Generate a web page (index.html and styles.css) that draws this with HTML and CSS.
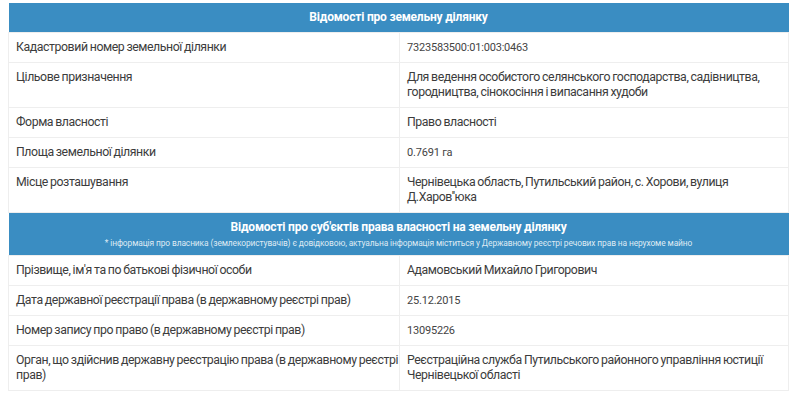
FILE: index.html
```html
<!DOCTYPE html>
<html lang="uk">
<head>
<meta charset="utf-8">
<title>Відомості про земельну ділянку</title>
<link rel="stylesheet" href="styles.css">
</head>
<body>
<table class="info">
  <colgroup><col class="c-label"><col class="c-value"></colgroup>
  <tr class="head"><th colspan="2">Відомості про земельну ділянку</th></tr>
  <tr><td>Кадастровий номер земельної ділянки</td><td class="num">7323583500:01:003:0463</td></tr>
  <tr><td>Цільове призначення</td><td>Для ведення особистого селянського господарства, садівництва, городництва, сінокосіння і випасання худоби</td></tr>
  <tr><td>Форма власності</td><td>Право власності</td></tr>
  <tr><td>Площа земельної ділянки</td><td class="num">0.7691 га</td></tr>
  <tr><td>Місце розташування</td><td>Чернівецька область, Путильський район, с. Хорови, вулиця Д.Харов''юка</td></tr>
  <tr class="head head2"><th colspan="2">Відомості про суб'єктів права власності на земельну ділянку<span class="note">* інформація про власника (землекористувачів) є довідковою, актуальна інформація міститься у Державному реєстрі речових прав на нерухоме майно</span></th></tr>
  <tr><td>Прізвище, ім'я та по батькові фізичної особи</td><td>Адамовський Михайло Григорович</td></tr>
  <tr><td>Дата державної реєстрації права (в державному реєстрі прав)</td><td class="num">25.12.2015</td></tr>
  <tr><td>Номер запису про право (в державному реєстрі прав)</td><td class="num">13095226</td></tr>
  <tr><td>Орган, що здійснив державну реєстрацію права (в державному реєстрі прав)</td><td>Реєстраційна служба Путильського районного управління юстиції Чернівецької області</td></tr>
</table>
</body>
</html>
```
FILE: styles.css
```css
html, body {
  background: #ffffff;
}
body {
  margin: 3px 6px 0 8px;
  font-family: Roboto, "Noto Sans", sans-serif;
  font-size: 12.3px;
  letter-spacing: -0.42px;
  word-spacing: -0.5px;
  color: #3c3c3c;
}
.info {
  width: 781px;
  border-collapse: collapse;
  table-layout: fixed;
}
.c-label { width: 391px; }
.info td {
  padding: 7px 1px 7px 7px;
  line-height: 15px;
  vertical-align: top;
  border: 1px solid #eeeeee;
  text-align: left;
}
.info td.num {
  font-size: 11px;
  letter-spacing: -0.2px;
  word-spacing: 0;
  color: #444;
}
.head th {
  background: #3a8dc2;
  color: #ffffff;
  font-weight: bold;
  font-size: 12px;
  letter-spacing: -0.2px;
  word-spacing: 0;
  text-align: center;
  padding: 7px 7px;
  line-height: 15px;
  border: 0;
}
.head2 th {
  padding: 7px 7px 6px;
}
.note {
  display: block;
  font-size: 8.4px;
  font-weight: normal;
  letter-spacing: -0.1px;
  line-height: 12px;
  margin-top: 2px;
  color: #dfeaf3;
}
```
